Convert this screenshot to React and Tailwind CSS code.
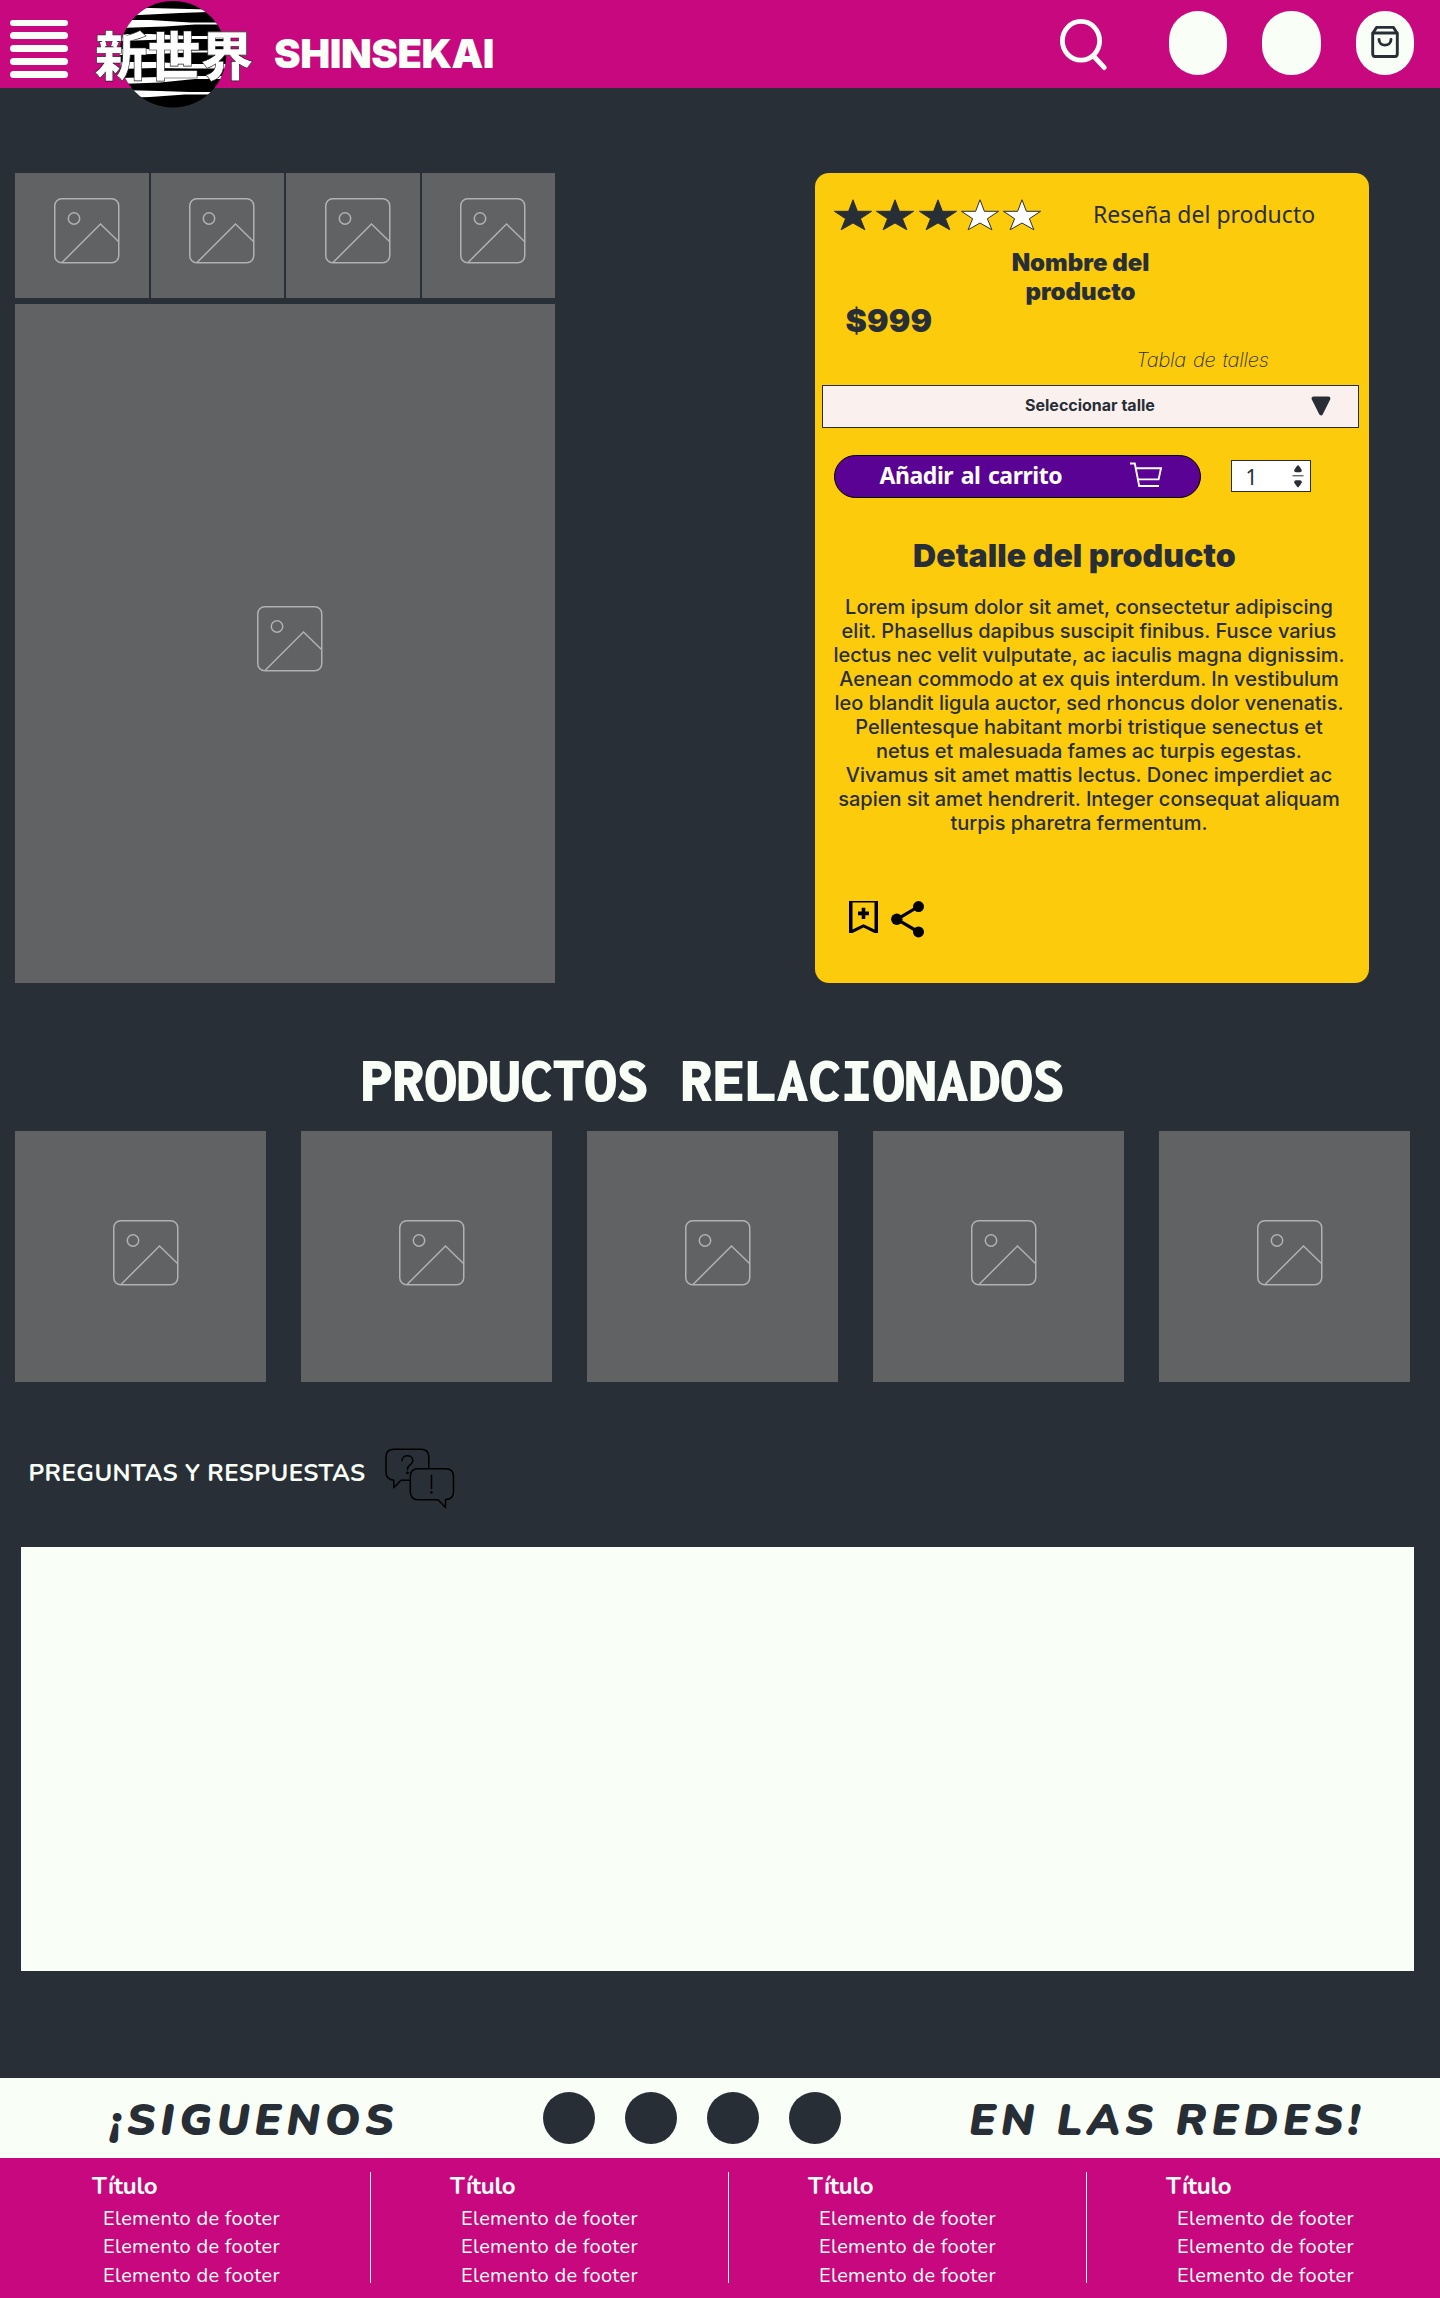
import React from "react";

const LOREM = [
  "Lorem ipsum dolor sit amet, consectetur adipiscing",
  "elit. Phasellus dapibus suscipit finibus. Fusce varius",
  "lectus nec velit vulputate, ac iaculis magna dignissim.",
  "Aenean commodo at ex quis interdum. In vestibulum",
  "leo blandit ligula auctor, sed rhoncus dolor venenatis.",
  "Pellentesque habitant morbi tristique senectus et",
  "netus et malesuada fames ac turpis egestas.",
  "Vivamus sit amet mattis lectus. Donec imperdiet ac",
  "sapien sit amet hendrerit. Integer consequat aliquam",
  "turpis pharetra fermentum.",
];

function PictureIcon({ className = "" }) {
  return (
    <svg className={className} width="66" height="66" viewBox="0 0 66 66" fill="none" stroke="#b0b1b2" strokeWidth="1.5">
      <rect x="0.75" y="0.75" width="64" height="64" rx="7" />
      <circle cx="20" cy="20.5" r="5.7" />
      <path d="M8 64.5 46.5 26 64.5 43.5" />
    </svg>
  );
}

function Logo() {
  return (
    <div className="relative ml-[28px] h-[108px] w-[154px] self-start">
      <svg className="absolute left-[23px] top-0" width="108" height="108" viewBox="119 0 108 108">
        <clipPath id="disc">
          <circle cx="173" cy="54.3" r="53.3" />
        </clipPath>
        <circle cx="173" cy="54.3" r="53.3" fill="#000" />
        <g clipPath="url(#disc)" fill="#fff">
          <path d="M118 8H150L208 9.500V12L180 13 118 16Z" />
          <path d="M118 20H150L190 22.500H228V24.500H195L165 26.500 118 28Z" />
          <path d="M118 34H150L190 36H228V39H195L165 39.500 118 41Z" />
          <path d="M118 49H155L190 50.500H228V52.500H190L155 54 118 55Z" />
          <path d="M118 62H155L190 64H228V68.500H190L155 68 118 69Z" />
          <path d="M118 78 160 77 200 76H228V79H195L160 82.500 118 84Z" />
          <path d="M118 90 160 91 190 92H228V94.500H185L150 97 118 98Z" />
        </g>
      </svg>
      <span
        lang="ja"
        className="absolute left-[-1.500px] top-[27px] whitespace-nowrap font-['Noto_Sans_CJK_JP',sans-serif] text-[53px] font-black leading-[52px] text-white [-webkit-text-stroke:0.6px_#222]"
      >
        新世界
      </span>
    </div>
  );
}

function Header() {
  return (
    <header className="flex h-[88px] bg-[#c8087e]">
      <div className="ml-[9.500px] mt-[19.500px] flex w-[58.500px] flex-col gap-[6.200px]">
        {[0, 1, 2, 3, 4].map((i) => (
          <span key={i} className="h-[6.800px] shrink-0 rounded-full bg-[#f9fff7]" />
        ))}
      </div>
      <Logo />
      <span className="ml-[24px] mt-[33.500px] font-['Inter',sans-serif] text-[40px] font-black leading-[40px] tracking-[-0.450px] text-[#f9fff7]">
        SHINSEKAI
      </span>
      <div className="ml-auto mr-[26px] flex">
        <svg className="mr-[59px] mt-[16px]" width="52" height="56" viewBox="1058 16 52 56" fill="none" stroke="#f9fff7" strokeLinecap="round">
          <ellipse cx="1081" cy="40.800" rx="18.600" ry="19.400" strokeWidth="4.800" />
          <path d="M1094 56.500 1104.300 67.600" strokeWidth="4.800" />
        </svg>
        <span className="mt-[11px] h-[64px] w-[58px] rounded-[29px] bg-[#f9fff7]" />
        <span className="ml-[35px] mt-[11px] h-[64px] w-[59px] rounded-[29px] bg-[#f9fff7]" />
        <span className="ml-[35px] mt-[11px] flex h-[64px] w-[58px] justify-center rounded-[29px] bg-[#f9fff7] pt-[14px]">
          <svg width="28" height="34" viewBox="0 0 28 34" fill="none" stroke="#282e36" strokeWidth="2.900" strokeLinecap="round" strokeLinejoin="round">
            <path d="M1.700 8.500 5.500 2.400H22.500L26.300 8.500V28.500Q26.300 31.500 24 31.500H4Q1.700 31.500 1.700 28.500Z" />
            <path d="M2 8H26" />
            <path d="M8 14.500C8 22 20 22 20 14.500" />
          </svg>
        </span>
      </div>
    </header>
  );
}

function Gallery() {
  return (
    <div className="w-[540px]">
      <div className="grid h-[124.500px] grid-cols-4 gap-[2px]">
        {[0, 1, 2, 3].map((i) => (
          <div key={i} className="bg-[#616263] pl-[38.500px] pt-[25px]">
            <PictureIcon />
          </div>
        ))}
      </div>
      <div className="mt-[6px] h-[679.500px] bg-[#616263] pl-[241.500px] pt-[302px]">
        <PictureIcon />
      </div>
    </div>
  );
}

function Star({ filled }) {
  return (
    <svg width="42.300" height="33" viewBox="0 0 42.300 33" className="shrink-0">
      <path
        d="M20 0.800 24.400 12.300H38.600L27.400 19.700 31.900 30.800 20 24 8.100 30.800 12.600 19.700 1.400 12.300H15.600Z"
        fill={filled ? "#282e36" : "#fff"}
        stroke="#282e36"
        strokeWidth="1"
      />
    </svg>
  );
}

function ProductCard() {
  return (
    <section className="flex h-[810px] w-[554px] flex-col rounded-[14px] bg-[#fccb0b] pt-[26px] text-[#282e36] font-['Inter',sans-serif]">
      <div className="flex h-[33px] pl-[18px]">
        {[1, 1, 1, 0, 0].map((f, i) => (
          <Star key={i} filled={f} />
        ))}
        <span className="ml-[48.500px] mt-[2.500px] whitespace-nowrap font-['Noto_Sans',sans-serif] text-[23px] leading-[24px]">
          Reseña del producto
        </span>
      </div>
      <h1 className="ml-[189.500px] mt-[16px] w-[152px] text-center text-[24px] font-black leading-[29px]">
        Nombre del producto
      </h1>
      <p className="-mt-[1px] ml-[30.500px] text-[32px] font-black leading-[32px] tracking-[0.200px]">$999</p>
      <p className="ml-[321px] mt-[11px] whitespace-nowrap text-[20px] font-extralight italic leading-[24px] tracking-[-0.200px] [word-spacing:1.500px]">
        Tabla de talles
      </p>
      <div className="ml-[7px] mt-[13px] flex h-[43px] w-[537px] items-center border border-[#282e36] bg-[#faf1ef]">
        <span className="-mt-[3px] ml-[202px] whitespace-nowrap text-[16px] font-bold leading-[20px]">Seleccionar talle</span>
        <svg className="-mt-[2px] ml-[156px]" width="20" height="22" viewBox="0 0 20 22">
          <path d="M2.600 3.500H17.400L10 18.300Z" fill="#282e36" stroke="#282e36" strokeWidth="4" strokeLinejoin="round" />
        </svg>
      </div>
      <div className="mt-[27px] flex pl-[18.500px]">
        <button className="flex h-[43px] w-[367px] rounded-full border border-black bg-[#590294] text-white">
          <span className="ml-[45px] mt-[6.500px] whitespace-nowrap font-['Noto_Sans',sans-serif] text-[23px] font-bold leading-[24px] tracking-[-0.450px] [word-spacing:2px]">
            Añadir al carrito
          </span>
          <svg className="ml-auto mr-[37px] mt-[5.500px]" width="33" height="26" viewBox="0 0 33 26" fill="none" stroke="#fff" strokeWidth="1.900">
            <path d="M0 1.500H4.800L9.200 24H29M5.800 6.300H31L28.600 17.400H8" />
          </svg>
        </button>
        <div className="ml-[30.500px] mt-[5px] flex h-[32px] w-[80px] border border-[#282e36] bg-white">
          <span className="ml-[13.500px] mt-[4px] font-['Noto_Sans',sans-serif] text-[21px] leading-[24px]">1</span>
          <svg className="ml-auto mr-[6px] mt-[3px]" width="12" height="25" viewBox="0 0 12 25" fill="#282e36">
            <path d="M6 1.200Q7 1.200 9.800 6 10 8.300 8 8.300H4Q2 8.300 2.200 6 5 1.200 6 1.200Z" />
            <rect x="0.500" y="11.300" width="11" height="1" />
            <path d="M6 23.400Q7 23.400 9.800 18.600 10 16.300 8 16.300H4Q2 16.300 2.200 18.600 5 23.400 6 23.400Z" />
          </svg>
        </div>
      </div>
      <h2 className="ml-[98px] mt-[38px] whitespace-nowrap text-[32px] font-black leading-[40px] tracking-[0.050px]">
        Detalle del producto
      </h2>
      <p className="mt-[18.500px] w-[548px] text-center text-[20px] font-medium leading-[24px] tracking-[-0.010px]">
        {LOREM.map((line) => (
          <span key={line} className="block whitespace-nowrap last:pr-[20px]">{line}</span>
        ))}
      </p>
      <div className="mt-[66px] flex pl-[34px]">
        <svg width="29" height="33" viewBox="0 0 29 33" fill="none" stroke="#000">
          <path d="M0 0H29V32H25.500L14.500 26.500 3.500 32H0ZM3.500 1.500V28.500L14.500 23.200 25.500 28.500V1.500Z" fill="#000" fillRule="evenodd" stroke="none" />
          <path d="M14.500 6.800V18M9 12.400H20" strokeWidth="3.600" />
        </svg>
        <svg className="ml-[13px]" width="34" height="37" viewBox="0 0 34 37" stroke="#000" strokeWidth="3.200">
          <path d="M27.500 5.500 6 18.300 27.500 31" fill="none" />
          <g stroke="none">
            <ellipse cx="5.800" cy="18.200" rx="5.700" ry="5.700" />
            <ellipse cx="27.500" cy="5.600" rx="5.500" ry="5.500" />
            <ellipse cx="27.500" cy="30.900" rx="5.500" ry="5.500" />
          </g>
        </svg>
      </div>
    </section>
  );
}

function ChatIcon() {
  return (
    <svg className="ml-[18px]" width="72" height="62" viewBox="384 1447 72 62" fill="none" stroke="#000" strokeWidth="1.500" strokeLinejoin="round" strokeLinecap="round">
      <path d="M410 1480.300H401L393.800 1487.800V1480.300Q386 1479.500 386 1472V1457Q386 1449.300 394 1449.300H421Q428.800 1449.300 428.800 1457V1468.500" />
      <path d="M418 1468.700H445.500Q453.500 1468.700 453.500 1476.500V1491.500Q453.500 1499.500 445.500 1499.500V1507.500L438 1499.700H418Q410.300 1499.700 410.300 1491.500V1476.500Q410.300 1468.700 418 1468.700Z" />
      <path d="M402 1460.800C402 1454 412.800 1454 412.800 1460.800 412.800 1465 407.400 1464.500 407.400 1469.500" />
      <path d="M431.500 1475.500V1488.500" />
      <circle cx="407.400" cy="1472.700" r="0.900" fill="#000" strokeWidth="1" />
      <circle cx="431.500" cy="1492.400" r="0.900" fill="#000" strokeWidth="1" />
    </svg>
  );
}

export default function App() {
  return (
    <div className="flex h-[2298px] w-[1440px] flex-col overflow-hidden bg-[#282f36]">
      <Header />
      <main className="flex h-[1990px] shrink-0 flex-col">
        <div className="mt-[85px] flex justify-between pl-[15px] pr-[71px]">
          <Gallery />
          <ProductCard />
        </div>
        <h2 className="ml-[360.500px] mt-[65px] whitespace-nowrap font-['Inconsolata','Noto_Sans_Mono_CJK_JP',monospace] text-[64px] font-black leading-[64px] text-[#f9fff7]">
          PRODUCTOS RELACIONADOS
        </h2>
        <div className="mt-[19px] flex gap-[35px] pl-[15px]">
          {[0, 1, 2, 3, 4].map((i) => (
            <div key={i} className="h-[251px] w-[251px] shrink-0 bg-[#616263] pl-[98px] pt-[88.500px]">
              <PictureIcon />
            </div>
          ))}
        </div>
        <div className="mt-[65px] flex pl-[28.500px]">
          <span className="mt-[14px] w-[337px] whitespace-nowrap font-['Nunito','Lato',sans-serif] text-[24px] font-bold leading-[24px] tracking-[0.450px] text-[#f9fff7]">
            PREGUNTAS Y RESPUESTAS
          </span>
          <ChatIcon />
        </div>
        <div className="ml-[21px] mt-[38px] h-[423.500px] w-[1393px] shrink-0 bg-[#f9fff7]" />
      </main>
      <section className="flex h-[80px] shrink-0 bg-[#f9fff7] text-[#282e36] font-['Nunito','Lato',sans-serif]">
        <span className="ml-[110px] mt-[21px] w-[300px] whitespace-nowrap text-[44px] font-black italic leading-[44px] tracking-[4.850px]">¡SIGUENOS</span>
        <div className="ml-[133px] mt-[14px] flex w-[298px] gap-[30px]">
          {[0, 1, 2, 3].map((i) => (
            <span key={i} className="size-[52px] rounded-full bg-[#282e36]" />
          ))}
        </div>
        <span className="ml-[128px] mt-[21px] whitespace-nowrap text-[44px] font-black italic leading-[44px] tracking-[4.850px]">EN LAS REDES!</span>
      </section>
      <footer className="flex h-[140px] shrink-0 bg-[#c8087e] pl-[13px] pt-[14px] text-[#f9fff7] font-['Nunito','Lato',sans-serif]">
        {[0, 1, 2, 3].map((i) => (
          <div key={i} className={`h-[111px] w-[358px] shrink-0 pl-[79px] pt-[1.500px] ${i < 3 ? "border-r border-[#f9fff7]" : ""}`}>
            <h3 className="text-[24px] font-bold leading-[24px] tracking-[-0.250px]">Título</h3>
            <ul className="mt-[7px] pl-[11px] text-[20px] leading-[28.500px] tracking-[0.330px]">
              <li>Elemento de footer</li>
              <li>Elemento de footer</li>
              <li>Elemento de footer</li>
            </ul>
          </div>
        ))}
      </footer>
    </div>
  );
}
